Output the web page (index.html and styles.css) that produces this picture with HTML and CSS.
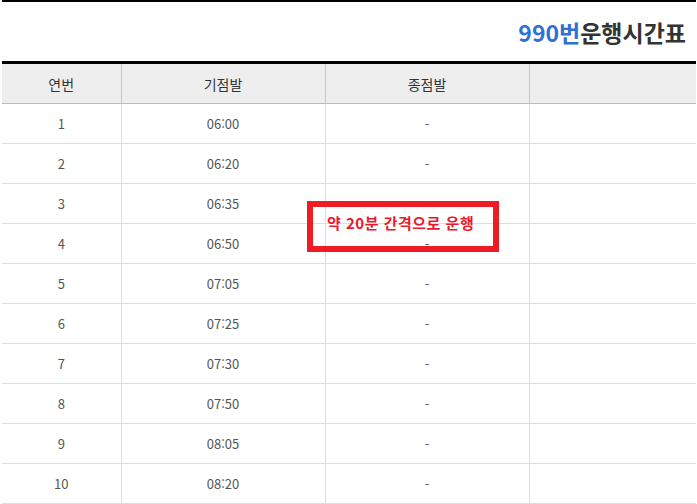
FILE: index.html
```html
<!DOCTYPE html>
<html lang="ko">
<head>
<meta charset="utf-8">
<link rel="stylesheet" href="styles.css">
</head>
<body>
<div class="page">
  <h2 class="title"><span class="num">990번</span>운행시간표</h2>
  <div class="table-wrap">
    <table class="timetable">
      <colgroup>
        <col class="c1"><col class="c2"><col class="c3"><col class="c4">
      </colgroup>
      <thead>
        <tr><th>연번</th><th>기점발</th><th>종점발</th><th></th></tr>
      </thead>
      <tbody>
        <tr><td>1</td><td>06:00</td><td>-</td><td></td></tr>
        <tr><td>2</td><td>06:20</td><td>-</td><td></td></tr>
        <tr><td>3</td><td>06:35</td><td>-</td><td></td></tr>
        <tr><td>4</td><td>06:50</td><td>-</td><td></td></tr>
        <tr><td>5</td><td>07:05</td><td>-</td><td></td></tr>
        <tr><td>6</td><td>07:25</td><td>-</td><td></td></tr>
        <tr><td>7</td><td>07:30</td><td>-</td><td></td></tr>
        <tr><td>8</td><td>07:50</td><td>-</td><td></td></tr>
        <tr><td>9</td><td>08:05</td><td>-</td><td></td></tr>
        <tr><td>10</td><td>08:20</td><td>-</td><td></td></tr>
      </tbody>
    </table>
    <div class="note">약 20분 간격으로 운행</div>
  </div>
</div>
</body>
</html>
```

FILE: styles.css
```css
html, body {
  margin: 0;
  padding: 0;
  background: #fff;
}
body {
  font-family: "Noto Sans CJK KR", "Noto Sans", sans-serif;
}
.page {
  margin: 0 1px 0 2px;
  border-top: 2px solid #000;
}
.title {
  margin: 0;
  height: 59px;
  box-sizing: border-box;
  padding: 15px 10px 0 0;
  text-align: right;
  font-size: 23px;
  font-weight: 700;
  line-height: 30px;
  color: #333;
  letter-spacing: 0;
}
.title .num {
  color: #2f6fd6;
}
.table-wrap {
  position: relative;
}
.timetable {
  width: 100%;
  border-collapse: collapse;
  table-layout: fixed;
  border-top: 3px solid #000;
}
.c1 { width: 119px; }
.c2 { width: 204px; }
.c3 { width: 204px; }
.timetable th {
  background: #eeeeee;
  height: 39px;
  padding: 0;
  font-size: 14px;
  font-weight: 400;
  color: #333;
  border-left: 1px solid #c8c8c8;
  border-bottom: 1px solid #bdbdbd;
}
.timetable td {
  height: 39px;
  padding: 0;
  text-align: center;
  font-size: 13px;
  color: #555;
  border-left: 1px solid #dedede;
  border-bottom: 1px solid #dedede;
}
.timetable th:first-child,
.timetable td:first-child {
  border-left: none;
}
.note {
  position: absolute;
  left: 305px;
  top: 140px;
  width: 166px;
  height: 39px;
  border: 6px solid #ee1c25;
  color: #e8192c;
  font-size: 15px;
  font-weight: 700;
  line-height: 32px;
  padding-left: 14px;
  box-sizing: content-box;
  white-space: nowrap;
  letter-spacing: 0.5px;
}
```
